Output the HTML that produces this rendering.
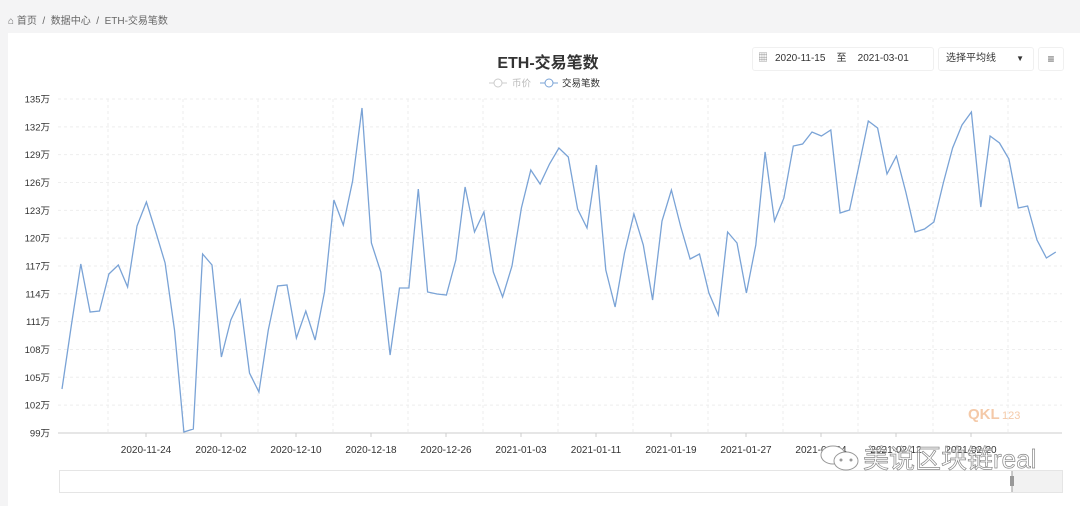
<!DOCTYPE html>
<html><head><meta charset="utf-8">
<style>
body{margin:0;width:1080px;height:506px;background:#f4f4f5;font-family:"Liberation Sans","Noto Sans CJK SC",sans-serif;overflow:hidden;position:relative}
.bc{position:absolute;left:8px;top:12px;font-size:10px;color:#666}
.panel{position:absolute;left:8px;top:33px;width:1072px;height:473px;background:#fff}
.title{position:absolute;left:0;width:1096px;top:49px;text-align:center;font-size:16px;font-weight:bold;color:#333}
.box{position:absolute;border:1px solid #f0f0f0;border-radius:3px;background:#fff;font-size:10px;color:#333;box-sizing:border-box}
</style></head><body>
<div class="bc">⌂ 首页 &nbsp;/&nbsp; 数据中心 &nbsp;/&nbsp; ETH-交易笔数</div>
<div class="panel"></div>
<div class="title">ETH-交易笔数</div>
<div class="box" style="left:752px;top:47px;width:182px;height:24px;line-height:22px;padding-left:22px">2020-11-15 &nbsp;&nbsp; 至 &nbsp;&nbsp; 2021-03-01<span style="position:absolute;left:5px;top:0;color:#888">▦</span></div>
<div class="box" style="left:938px;top:47px;width:96px;height:24px;line-height:22px;padding-left:7px">选择平均线<span style="position:absolute;right:9px;font-size:8px">▼</span></div>
<div class="box" style="left:1038px;top:47px;width:26px;height:24px;line-height:22px;text-align:center;color:#555;font-size:12px">≡</div>
<svg id="s" width="1080" height="506" style="position:absolute;left:0;top:0"></svg>
<script>
var ys=[389,325,264,312,311,274,265,287,226,202,232,263,330,432,429,254,265,357,320,300,373,392,330,286,285,338,311,340,292,200,225,181,108,243,272,355,288,288,189,292,294,295,260,187,232,212,272,297,266,208,170,184,164,148,157,209,228,165,270,307,253,214,245,300,221,190,227,259,254,293,315,232,243,293,245,152,221,198,146,144,132,136,130,213,210,166,121,128,174,156,192,232,229,222,183,148,125,112,207,136,143,159,208,206,240,258,252];
var h='';
var labs=['135万','132万','129万','126万','123万','120万','117万','114万','111万','108万','105万','102万','99万'];
for(var i=0;i<13;i++){var y=99+i*27.83;
 h+='<text x="50" y="'+(y+3.5)+'" font-size="9.5" fill="#333" text-anchor="end">'+labs[i]+'</text>';
 if(i<12)h+='<line x1="58" x2="1062" y1="'+y+'" y2="'+y+'" stroke="#eeeeee" stroke-dasharray="3,3"/>';}
for(var x=108;x<1062;x+=75)h+='<line x1="'+x+'" x2="'+x+'" y1="99" y2="433" stroke="#eeeeee" stroke-dasharray="3,3"/>';
h+='<line x1="58" x2="1062" y1="433" y2="433" stroke="#ccc"/>';
var d=['2020-11-24','2020-12-02','2020-12-10','2020-12-18','2020-12-26','2021-01-03','2021-01-11','2021-01-19','2021-01-27','2021-02-04','2021-02-12','2021-02-20'];
for(var i=0;i<12;i++){var x=146+75*i;h+='<line x1="'+x+'" x2="'+x+'" y1="433" y2="437" stroke="#ccc"/><text x="'+x+'" y="453" font-size="10" fill="#333" text-anchor="middle">'+d[i]+'</text>';}
var p='';for(var i=0;i<ys.length;i++)p+=(i?' ':'')+(62+i*9.375).toFixed(1)+','+ys[i];
h+='<polyline points="'+p+'" fill="none" stroke="#7aa3d6" stroke-width="1.3"/>';
h+='<line x1="489" x2="507" y1="83" y2="83" stroke="#ccc"/><circle cx="498" cy="83" r="4" fill="#fff" stroke="#ccc"/><text x="512" y="86.5" font-size="9.5" fill="#bbb">币价</text>';
h+='<line x1="540" x2="558" y1="83" y2="83" stroke="#7aa3d6"/><circle cx="549" cy="83" r="4" fill="#fff" stroke="#7aa3d6"/><text x="562" y="86.5" font-size="9.5" fill="#333">交易笔数</text>';
h+='<rect x="59.5" y="470.5" width="1003" height="22" fill="none" stroke="#e5e5e5"/><rect x="1012" y="471" width="50" height="21" fill="#f2f2f2"/><line x1="1012" x2="1012" y1="471" y2="492" stroke="#999"/><rect x="1010" y="476" width="4" height="10" fill="#999"/>';
h+='<text x="968" y="419" font-size="15" font-weight="bold" fill="#f4c9a8">QKL</text><text x="1002" y="419" font-size="11" fill="#f4c9a8">123</text>';
h+='<ellipse cx="833" cy="455" rx="12" ry="9" fill="#fff" stroke="#999"/><ellipse cx="846" cy="461" rx="12" ry="9" fill="#fff" stroke="#999"/><circle cx="841" cy="460" r="1.5" fill="#999"/><circle cx="851" cy="460" r="1.5" fill="#999"/>';
h+='<text x="863" y="468" font-size="26" fill="#fff" fill-opacity="0.6" stroke="#888" stroke-width="0.7">美说区块链real</text>';
document.getElementById('s').innerHTML=h;
</script>
</body></html>
